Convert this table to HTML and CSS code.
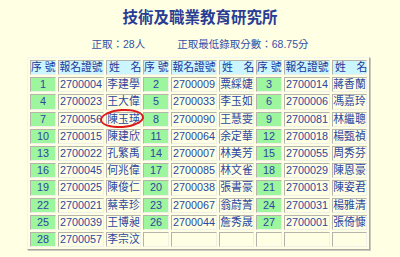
FILE: index.html
```html
<!DOCTYPE html>
<html lang="zh-Hant">
<head>
<meta charset="utf-8">
<link rel="stylesheet" href="styles.css">
</head>
<body>
<div class="page">
  <h1 class="title">技術及職業教育研究所</h1>
  <div class="sub">
    <span>正取：28人</span>
    <span>正取最低錄取分數：68.75分</span>
  </div>
  <table class="list">
    <colgroup>
      <col class="c-seq"><col class="c-reg"><col class="c-name">
      <col class="c-seq"><col class="c-reg"><col class="c-name">
      <col class="c-seq"><col class="c-reg"><col class="c-name">
    </colgroup>
    <tr class="head">
      <th>序 號</th><th>報名證號</th><th class="nm">姓　名</th>
      <th>序 號</th><th>報名證號</th><th class="nm">姓　名</th>
      <th>序 號</th><th>報名證號</th><th class="nm">姓　名</th>
    </tr>
    <tr><td class="seq">1</td><td>2700004</td><td>李建學</td><td class="seq">2</td><td>2700009</td><td>粟綵婕</td><td class="seq">3</td><td>2700014</td><td>蔣香蘭</td></tr>
    <tr><td class="seq">4</td><td>2700023</td><td>王大偉</td><td class="seq">5</td><td>2700033</td><td>李玉如</td><td class="seq">6</td><td>2700006</td><td>馮嘉玲</td></tr>
    <tr><td class="seq">7</td><td>2700056</td><td class="mark">陳玉瑛<span class="ring"></span></td><td class="seq">8</td><td>2700090</td><td>王慧雯</td><td class="seq">9</td><td>2700081</td><td>林繼聰</td></tr>
    <tr><td class="seq">10</td><td>2700015</td><td>陳建欣</td><td class="seq">11</td><td>2700064</td><td>余定華</td><td class="seq">12</td><td>2700018</td><td>楊甄禎</td></tr>
    <tr><td class="seq">13</td><td>2700022</td><td>孔繁禹</td><td class="seq">14</td><td>2700007</td><td>林美芳</td><td class="seq">15</td><td>2700055</td><td>周秀芬</td></tr>
    <tr><td class="seq">16</td><td>2700045</td><td>何兆偉</td><td class="seq">17</td><td>2700085</td><td>林文雀</td><td class="seq">18</td><td>2700029</td><td>陳恩豪</td></tr>
    <tr><td class="seq">19</td><td>2700025</td><td>陳俊仁</td><td class="seq">20</td><td>2700038</td><td>張書豪</td><td class="seq">21</td><td>2700013</td><td>陳姿君</td></tr>
    <tr><td class="seq">22</td><td>2700021</td><td>蔡幸珍</td><td class="seq">23</td><td>2700067</td><td>翁蔚菁</td><td class="seq">24</td><td>2700031</td><td>楊雅清</td></tr>
    <tr><td class="seq">25</td><td>2700039</td><td>王博昶</td><td class="seq">26</td><td>2700044</td><td>詹秀晟</td><td class="seq">27</td><td>2700001</td><td>張倚慷</td></tr>
    <tr><td class="seq">28</td><td>2700057</td><td>李宗汶</td><td></td><td></td><td></td><td></td><td></td><td></td></tr>
  </table>
</div>
</body>
</html>
```

FILE: styles.css
```css
html, body {
  margin: 0;
  padding: 0;
  background: #ffffe4;
}
.page {
  width: 400px;
  height: 257px;
  display: flex;
  flex-direction: column;
  align-items: center;
  font-family: "Liberation Sans", "Noto Sans CJK TC", sans-serif;
  color: #2c46a0;
}
.title {
  margin: 6px 0 0 0;
  font-family: "Noto Sans CJK TC", serif;
  font-weight: bold;
  font-size: 15.5px;
  line-height: 20px;
  color: #2a3d95;
}
.sub {
  margin-top: 11px;
  display: flex;
  gap: 32px;
  font-size: 10.5px;
  line-height: 14px;
  color: #3551a8;
}
.list {
  width: 341px;
  margin-top: 6px;
  margin-left: -3px;
  border-collapse: separate;
  border-spacing: 2px;
  border: 1px solid;
  border-color: #f4f4f0 #a8a8a0 #a8a8a0 #f4f4f0;
  box-shadow: 1px 1px 0 #c8c8bc;
  table-layout: fixed;
  font-size: 10.8px;
}
.c-seq { width: 26px; }
.c-reg { width: 46px; }
.c-name { width: 35px; }
.list th, .list td {
  height: 13.2px;
  padding: 0;
  border: 1px solid;
  border-color: #b4b4ac #f0f0ea #f0f0ea #b4b4ac;
  text-align: center;
  line-height: 13px;
  white-space: nowrap;
  overflow: visible;
  font-weight: normal;
  color: #2c46a0;
}
.list th {
  background: #ccf6ff;
  color: #22369a;
}
.list th.nm {
  text-align: justify;
  text-align-last: justify;
  padding: 0 2px;
}
.list td.seq {
  background: #9df59d;
}
.mark {
  position: relative;
}
.ring {
  position: absolute;
  left: -7px;
  top: -4px;
  width: 44px;
  height: 19px;
  border: 2px solid #dd1a1a;
  border-radius: 50%;
  box-sizing: border-box;
  transform: rotate(-4deg);
}
```
